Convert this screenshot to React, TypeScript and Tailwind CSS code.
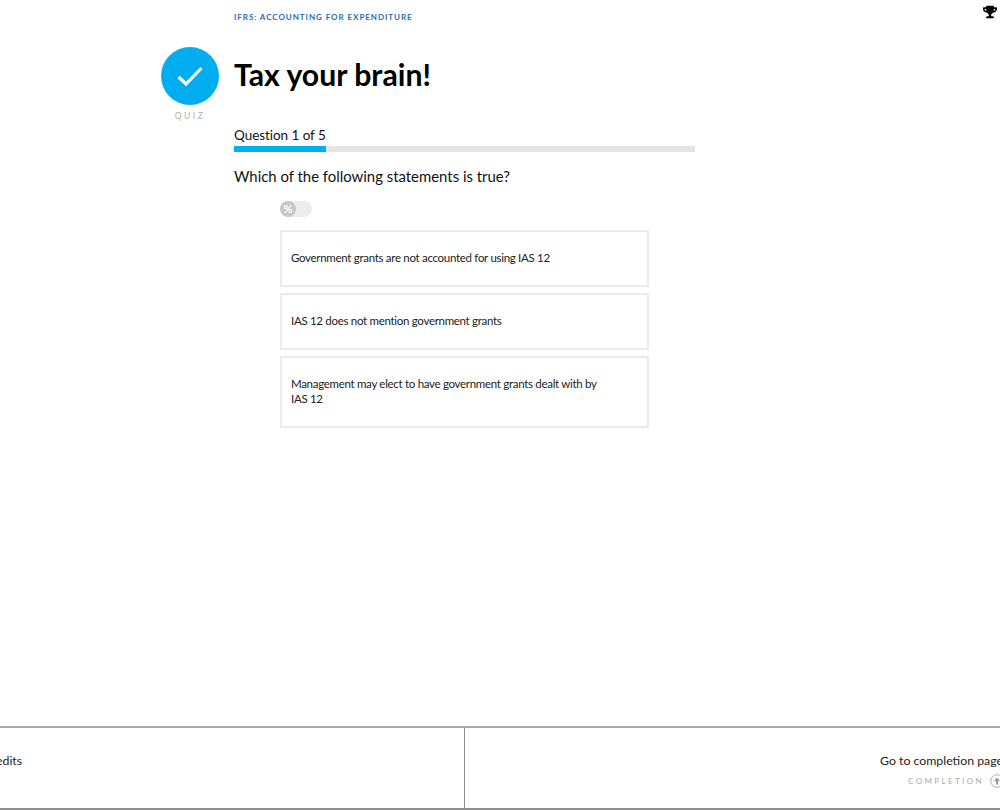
import { FaTrophy } from "react-icons/fa";

const answers = [
  "Government grants are not accounted for using IAS 12",
  "IAS 12 does not mention government grants",
  "Management may elect to have government grants dealt with by IAS 12",
];

function AnswerCard({ text }: { text: string }) {
  return (
    <div className="w-[369px] min-h-[57px] border-2 border-[#ebebeb] pl-[9px] pr-[40px] pt-[18px] pb-[20px] text-[11.5px] leading-[15px] text-[#222] tracking-[-0.3px]">
      {text}
    </div>
  );
}

export default function App() {
  return (
    <div className="h-[810px] w-[1000px] overflow-hidden bg-white flex flex-col font-['Lato','Liberation_Sans',sans-serif] text-black">
      <header className="h-[726px] flex">
        {/* Quiz badge column */}
        <div className="w-[234px] pt-[47px] pl-[161px] shrink-0">
          <div className="w-[58px] h-[58px] rounded-full bg-[#00aeef] flex items-center justify-center">
            <svg width="30" height="24" viewBox="0 0 30 24" fill="none">
              <path d="M3.5 13 L11 20 L26.5 4" stroke="white" strokeWidth="3.2" />
            </svg>
          </div>
          <div className="mt-[6px] w-[58px] text-center text-[8.5px] leading-[11px] tracking-[2.5px] text-[#b0b0b0]">QUIZ</div>
        </div>

        {/* Question column */}
        <div className="w-[461px] shrink-0 pt-[12px]">
          <div className="text-[8px] leading-[10px] tracking-[0.95px] font-bold text-[#2a6ab5]">IFRS: ACCOUNTING FOR EXPENDITURE</div>
          <h1 className="mt-[30px] text-[30.2px] leading-[44px] font-bold">Tax your brain!</h1>
          <div className="mt-[30px] text-[13.5px] leading-[18px] tracking-[-0.05px] text-[#111]">Question 1 of 5</div>
          <div className="mt-[2px] h-[6px] bg-[#e4e4e4]">
            <div className="h-full w-[92px] bg-[#00aeef]" />
          </div>
          <h2 className="mt-[13px] text-[14.9px] leading-[22px] text-[#111]">Which of the following statements is true?</h2>
          <div className="ml-[46px] mt-[14px] w-[32px] h-[16px] rounded-full bg-[#ececec]">
            <div className="w-[16px] h-[16px] rounded-full bg-[#c8c8c8] text-white text-[11px] leading-[16px] font-bold text-center">%</div>
          </div>
          <div className="ml-[46px] mt-[13px] flex flex-col gap-[6px]">
            {answers.map((a) => (
              <AnswerCard key={a} text={a} />
            ))}
          </div>
        </div>

        <div className="flex-1 flex justify-end pt-[5px] pr-[3px]">
          <FaTrophy size={14} color="#000" />
        </div>
      </header>

      {/* Footer navigation, runs off both edges */}
      <footer className="h-[84px] flex border-t-2 border-b-2 border-t-[#a9a9a9] border-b-[#8f8f8f]">
        <div className="w-[465px] shrink-0 border-r border-[#8f8f8f] pt-[25px] pl-0 whitespace-nowrap">
          <div className="-ml-[56px] text-[12.3px] leading-[16px] text-[#222]">Review credits</div>
          <div className="-ml-[50px] mt-[5px] text-[8px] leading-[12px] tracking-[2.4px] text-[#bbb]">CREDITS</div>
        </div>
        <div className="flex-1 pt-[25px] pl-[415px] whitespace-nowrap">
          <div className="text-[12.3px] leading-[16px] text-[#222]">Go to completion page</div>
          <div className="mt-[5px] ml-[28px] flex items-center gap-[6px]">
            <span className="text-[8px] leading-[12px] tracking-[2.4px] text-[#aaa]">COMPLETION</span>
            <svg width="14" height="14" viewBox="0 0 14 14" fill="none" className="shrink-0">
              <circle cx="7" cy="7" r="6.25" stroke="#aaa" />
              <path d="M7 3.5 L10 7 H8 V10.5 H6 V7 H4 Z" fill="#999" />
            </svg>
          </div>
        </div>
      </footer>
    </div>
  );
}
